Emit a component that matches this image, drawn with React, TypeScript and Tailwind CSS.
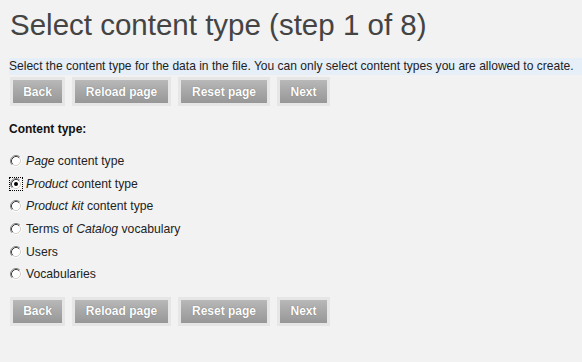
import React from 'react'

function Radio({ checked }: { checked?: boolean }) {
  return (
    <span
      className={
        'inline-block w-[12px] h-[12px] shrink-0' +
        (checked ? ' outline-1 outline-dotted outline-black' : '')
      }
    >
      <svg width="12" height="12" viewBox="0 0 12 12">
        <circle cx="6" cy="6" r="4.5" fill="#ffffff" />
        <path d="M2.11 9.89 A5.5 5.5 0 0 1 9.89 2.11" fill="none" stroke="#808080" strokeWidth="1" />
        <path d="M9.89 2.11 A5.5 5.5 0 0 1 2.11 9.89" fill="none" stroke="#ffffff" strokeWidth="1" />
        <path d="M2.82 9.18 A4.5 4.5 0 0 1 9.18 2.82" fill="none" stroke="#404040" strokeWidth="1" />
        <path d="M9.18 2.82 A4.5 4.5 0 0 1 2.82 9.18" fill="none" stroke="#d4d0c8" strokeWidth="1" />
        {checked && <circle cx="6" cy="6" r="2" fill="#000000" />}
      </svg>
    </span>
  )
}

function ButtonRow() {
  const buttons = [
    { label: 'Back', w: 'w-[49px]' },
    { label: 'Reload page', w: 'w-[93px]' },
    { label: 'Reset page', w: 'w-[86px]' },
    { label: 'Next', w: 'w-[47px]' },
  ]
  return (
    <div className="flex gap-[7px] pl-[10px]">
      {buttons.map((b) => (
        <div key={b.label} className="p-[3px] bg-[#e6e6e6]">
          <button
            className={
              b.w +
              ' h-[23px] flex items-center justify-center bg-gradient-to-b from-[#b8b8b8] to-[#979797] text-white text-[12px] font-bold [text-shadow:0_0_1px_#666]'
            }
          >
            {b.label}
          </button>
        </div>
      ))}
    </div>
  )
}

export default function App() {
  const options: React.ReactNode[] = [
    <><i>Page</i> content type</>,
    <><i>Product</i> content type</>,
    <><i>Product kit</i> content type</>,
    <>Terms of <i>Catalog</i> vocabulary</>,
    <>Users</>,
    <>Vocabularies</>,
  ]

  return (
    <div className="min-h-[362px] bg-[#f2f2f2] font-['Liberation_Sans',Arial,sans-serif] text-[#222]">
      <h1 className="pt-[8px] pl-[10px] text-[29.5px] leading-[33px] text-[#444]">
        Select content type (step 1 of 8)
      </h1>

      <p className="mt-[17px] ml-[9px] h-[17px] bg-[#e6eef8] text-[12.05px] leading-[17px] text-[#222]">
        Select the content type for the data in the file. You can only select content types you are allowed to create.
      </p>

      <div className="mt-[2px]">
        <ButtonRow />
      </div>

      <div className="mt-[16px] pl-[9px] text-[12px] leading-[15px] font-bold text-[#111]">Content type:</div>

      <div className="mt-[13px] flex flex-col">
        {options.map((o, i) => (
          <label key={i} className="flex items-center h-[22.6px] pl-[10px] text-[12.2px]">
            <Radio checked={i === 1} />
            <span className="ml-[4px]">{o}</span>
          </label>
        ))}
      </div>

      <div className="mt-[11px]">
        <ButtonRow />
      </div>
    </div>
  )
}
